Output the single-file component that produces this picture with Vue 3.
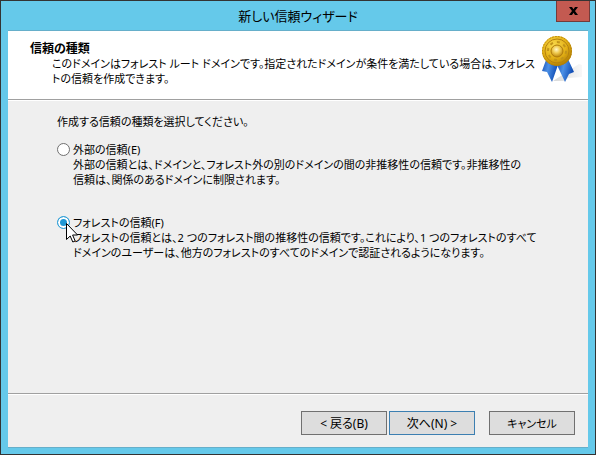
<template>
  <div class="window">
    <header class="titlebar">
      <h1 class="titlebar-text">新しい信頼ウィザード</h1>
      <button class="close" type="button" aria-label="閉じる">
        <svg width="9" height="8" viewBox="0 0 9 8">
          <path d="M0 0h3l1.5 2.2L6 0h3L6 4l3 4H6L4.500 5.800 3 8H0l3-4z" fill="#000" />
        </svg>
      </button>
    </header>

    <form class="client" @submit.prevent>
      <div class="banner">
        <div class="banner-text">
          <h2>信頼の種類</h2>
          <p>
            このドメインはフォレスト ルート ドメインです。指定されたドメインが条件を満たしている場合は、フォレス<br />トの信頼を作成できます。
          </p>
        </div>
        <svg class="medal" width="44" height="50" viewBox="0 0 44 50">
          <defs>
            <radialGradient id="gold" cx="40%" cy="32%" r="70%">
              <stop offset="0" stop-color="#f9da4c" />
              <stop offset="0.6" stop-color="#e3b016" />
              <stop offset="1" stop-color="#b07c00" />
            </radialGradient>
            <radialGradient id="boss" cx="45%" cy="38%" r="60%">
              <stop offset="0" stop-color="#fff6c8" />
              <stop offset="0.5" stop-color="#f0cb50" />
              <stop offset="1" stop-color="#c08a10" />
            </radialGradient>
            <linearGradient id="ribbon" x1="0" y1="0" x2="1" y2="0.3">
              <stop offset="0" stop-color="#1850b4" />
              <stop offset="0.45" stop-color="#4c90e6" />
              <stop offset="1" stop-color="#0f4cb4" />
            </linearGradient>
            <linearGradient id="shade" x1="0" y1="0" x2="1" y2="0">
              <stop offset="0" stop-color="#d8d8d8" />
              <stop offset="1" stop-color="#f8f8f8" />
            </linearGradient>
          </defs>
          <path d="M14 48L40 31l3 1v12l-14 1-4 3z" fill="url(#shade)" />
          <path d="M7 27L3 38l5 1 5 10 6-17z" fill="url(#ribbon)" />
          <path d="M18 32l8 17 4-8 5-2-6-13z" fill="url(#ribbon)" />
          <circle cx="18" cy="18" r="15" fill="url(#gold)" />
          <circle cx="18" cy="18" r="14.500" fill="none" stroke="#b78309" stroke-dasharray="1.500 1.500" />
          <circle cx="18" cy="18" r="12" fill="none" stroke="#b58210" />
          <circle cx="18" cy="18" r="9" fill="none" stroke="#c2941a" stroke-width="2" stroke-dasharray="3 4" />
          <circle cx="18" cy="18" r="6" fill="url(#boss)" stroke="#b07c0c" />
        </svg>
      </div>

      <fieldset class="choices">
        <legend>作成する信頼の種類を選択してください。</legend>

        <div class="choice">
          <input id="external" v-model="trustType" type="radio" value="external" />
          <label for="external">外部の信頼(E)</label>
          <p>
            外部の信頼とは、ドメインと、フォレスト外の別のドメインの間の非推移性の信頼です。非推移性の<br />信頼は、関係のあるドメインに制限されます。
          </p>
        </div>

        <div class="choice">
          <input id="forest" v-model="trustType" type="radio" value="forest" />
          <label for="forest">フォレストの信頼(F)</label>
          <p>
            フォレストの信頼とは、2 つのフォレスト間の推移性の信頼です。これにより、1 つのフォレストのすべて<br />ドメインのユーザーは、他方のフォレストのすべてのドメインで認証されるようになります。
          </p>
          <svg class="pointer" width="12" height="20" viewBox="0 0 12 20">
            <path
              d="M.5.5v16l3.700-3.500 2.600 6 2.400-1-2.600-6h5z"
              fill="#fff"
              stroke="#000"
            />
          </svg>
        </div>
      </fieldset>

      <footer class="actions">
        <button type="button">&lt; 戻る(B)</button>
        <button class="default" type="submit">次へ(N) &gt;</button>
        <button class="cancel" type="button">キャンセル</button>
      </footer>
    </form>
  </div>
</template>

<script setup>
import { ref } from 'vue';

const trustType = ref('forest');
</script>

<style>
body {
  margin: 0;
}
</style>

<style scoped>
.window {
  box-sizing: border-box;
  display: flex;
  flex-direction: column;
  min-height: 100vh;
  padding: 0 7px 6px;
  border: 1px solid #333;
  background: #65c9ea;
  color: #000;
  font-family: 'Noto Sans', 'Noto Sans CJK JP', sans-serif;
  font-size: 11px;
  line-height: 15px;
  font-feature-settings: 'palt';
}
h1,
h2,
p {
  margin: 0;
}
button {
  padding: 0;
  color: inherit;
  font: inherit;
  font-feature-settings: inherit;
}
.titlebar {
  position: relative;
  height: 29px;
}
.titlebar-text {
  font-size: 13px;
  font-weight: 400;
  line-height: 30px;
  text-align: center;
}
.close {
  position: absolute;
  top: 0;
  right: -2px;
  display: flex;
  align-items: center;
  justify-content: center;
  width: 34px;
  height: 21px;
  border: 1px solid #733b3a;
  border-top: 0;
  background: #c35a51;
}
.client {
  flex: 1;
  display: flex;
  flex-direction: column;
  border-top: 1px solid #66afca;
  border-bottom: 1px solid #66afca;
  background: #efefef;
}
.banner {
  display: flex;
  justify-content: space-between;
  height: 68px;
  padding-left: 22px;
  border-bottom: 1px solid #a0a0a0;
  background: #fff;
  box-shadow: 0 1px #fff;
}
.banner-text {
  padding-top: 10px;
  white-space: nowrap;
}
.banner-text h2 {
  font-size: 12px;
  font-weight: 700;
}
.banner-text p {
  padding-left: 22px;
}
.medal {
  flex: none;
  margin: 2px 5px 0 0;
}
.choices {
  flex: 1;
  margin: 0;
  padding: 0 0 0 49px;
  border: 0;
  min-width: 0;
  white-space: nowrap;
}
.choices legend {
  padding: 14px 0 13px;
}
.choice {
  position: relative;
  display: grid;
  grid-template-columns: 13px 1fr;
  column-gap: 3px;
  align-items: center;
  margin-bottom: 28px;
}
.choice p {
  grid-column: 2;
}
.choice input {
  appearance: none;
  box-sizing: border-box;
  width: 13px;
  height: 13px;
  margin: 0;
  border: 1px solid #707070;
  border-radius: 50%;
  background: #fff;
}
.choice input:checked {
  border-color: #2f9fd8;
  background: #1f97d4;
  box-shadow: inset 0 0 0 2px #fff;
}
.pointer {
  position: absolute;
  top: 8px;
  left: 9px;
}
.actions {
  display: flex;
  justify-content: flex-end;
  gap: 2px;
  padding: 17px 13px 12px 0;
  border-top: 1px solid #a0a0a0;
  box-shadow: inset 0 1px #fff;
}
.actions button {
  width: 86px;
  height: 24px;
  border: 1px solid #707070;
  background: #ddd;
  font-size: 12px;
}
.actions .default {
  border-color: #3c7fb1;
}
.actions .cancel {
  margin-left: 12px;
  font-size: 11px;
}
</style>
